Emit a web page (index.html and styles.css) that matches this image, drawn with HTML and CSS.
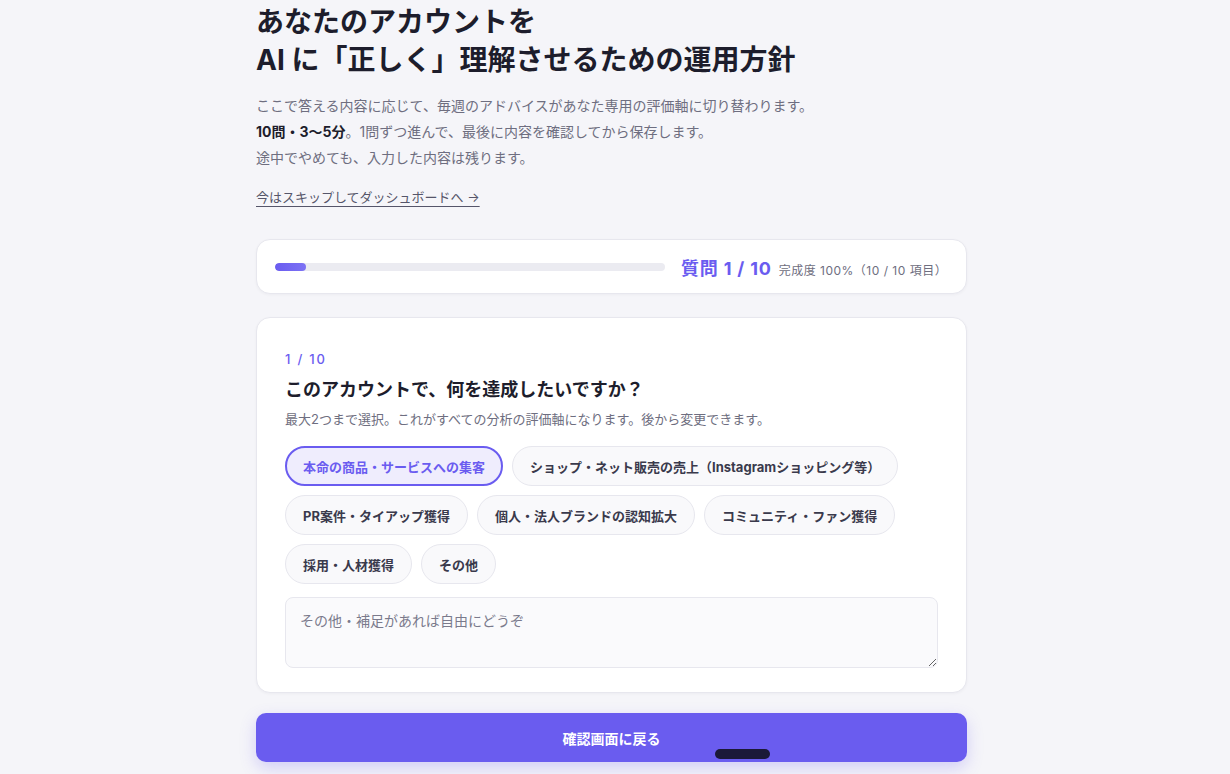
FILE: index.html
```html
<!DOCTYPE html>
<html lang="ja">
<head>
<meta charset="utf-8">
<title>運用方針</title>
<link rel="stylesheet" href="styles.css">
</head>
<body>
<main class="page">
  <header class="intro">
    <h1 class="title">あなたのアカウントを<br>AI に「正しく」理解させるための運用方針</h1>
    <p class="lead">ここで答える内容に応じて、毎週のアドバイスがあなた専用の評価軸に切り替わります。<br><strong>10問・3〜5分</strong>。1問ずつ進んで、最後に内容を確認してから保存します。<br>途中でやめても、入力した内容は残ります。</p>
    <a class="skip" href="#">今はスキップしてダッシュボードへ →</a>
  </header>

  <section class="card progress">
    <div class="track"><div class="fill" style="width:8%"></div></div>
    <div class="progress-label"><span class="q-count">質問 1 / 10</span><span class="q-done">完成度 100%（10 / 10 項目）</span></div>
  </section>

  <section class="card question">
    <div class="step">1 / 10</div>
    <h2 class="q-title">このアカウントで、何を達成したいですか？</h2>
    <p class="hint">最大2つまで選択。これがすべての分析の評価軸になります。後から変更できます。</p>
    <div class="chips">
      <button class="chip selected">本命の商品・サービスへの集客</button>
      <button class="chip">ショップ・ネット販売の売上（Instagramショッピング等）</button>
      <button class="chip">PR案件・タイアップ獲得</button>
      <button class="chip">個人・法人ブランドの認知拡大</button>
      <button class="chip">コミュニティ・ファン獲得</button>
      <button class="chip">採用・人材獲得</button>
      <button class="chip">その他</button>
    </div>
    <textarea class="note" placeholder="その他・補足があれば自由にどうぞ"></textarea>
  </section>

  <button class="primary">確認画面に戻る</button>
</main>
<div class="home-indicator"></div>
</body>
</html>
```
FILE: styles.css
```css
* { box-sizing: border-box; }
html, body { margin: 0; padding: 0; }
body {
  background: #f5f5f9;
  font-family: "Inter", "Noto Sans CJK JP", "Noto Sans", sans-serif;
  color: #1d1d2c;
  height: 774px;
  overflow: hidden;
}
.page {
  width: 711px;
  margin-left: calc(50% - 359px);
  padding-top: 3px;
  display: flex;
  flex-direction: column;
}
.title {
  margin: 0;
  font-size: 28px;
  line-height: 38px;
  font-weight: 700;
  color: #1d1d2c;
}
.lead {
  margin: 14px 0 0;
  font-size: 14px;
  line-height: 26px;
  color: #6e6e80;
}
.lead strong { color: #1d1d2c; font-weight: 700; }
.skip {
  display: inline-block;
  align-self: flex-start;
  margin-top: 16px;
  font-size: 13px;
  line-height: 20px;
  color: #55556a;
  text-decoration: underline;
  text-underline-offset: 4px;
  text-decoration-color: #55556a;
}
.intro { display: flex; flex-direction: column; }
.card {
  background: #fff;
  border: 1px solid #e7e7ee;
  border-radius: 14px;
  box-shadow: 0 1px 3px rgba(30, 30, 60, 0.04);
}
.progress {
  margin-top: 32px;
  height: 55px;
  display: flex;
  align-items: center;
  padding: 0 24px 0 18px;
  gap: 16px;
}
.track {
  flex: 0 0 390px;
  height: 8px;
  border-radius: 4px;
  background: #ebebf1;
  overflow: hidden;
}
.fill {
  height: 100%;
  border-radius: 4px;
  background: linear-gradient(90deg, #6a5cf0, #7d72f4);
}
.progress-label { display: flex; align-items: baseline; gap: 7px; white-space: nowrap; }
.q-count { font-size: 18px; font-weight: 700; color: #6a5cf0; letter-spacing: 0.8px; }
.q-done { font-size: 12px; color: #6e6e80; letter-spacing: 0.5px; }
.question {
  margin-top: 23px;
  padding: 32px 28px 24px;
  display: flex;
  flex-direction: column;
}
.step {
  font-size: 13px;
  line-height: 18px;
  color: #6a5cf0;
  letter-spacing: 1.8px;
  font-weight: 500;
}
.q-title {
  margin: 9px 0 0;
  font-size: 18px;
  line-height: 26px;
  font-weight: 700;
  color: #1d1d2c;
}
.hint {
  margin: 6px 0 0;
  font-size: 13px;
  line-height: 20px;
  color: #6e6e80;
}
.chips {
  margin-top: 17px;
  display: flex;
  flex-wrap: wrap;
  gap: 9px 9px;
}
.chip {
  font-family: inherit;
  height: 40px;
  padding: 0 17px;
  border-radius: 20px;
  border: 1px solid #e7e7ee;
  background: #f9f9fb;
  font-size: 13px;
  font-weight: 700;
  color: #3a3a4c;
  cursor: pointer;
}
.chip.selected {
  border: 2px solid #6a5cf0;
  background: #efedfd;
  color: #6a5cf0;
  padding: 0 16px;
}
.note {
  margin-top: 13px;
  height: 71px;
  width: 100%;
  resize: vertical;
  border: 1px solid #e7e7ee;
  border-radius: 8px;
  background: #fafafc;
  padding: 12px 14px;
  font-family: inherit;
  font-size: 14px;
  line-height: 22px;
  color: #1d1d2c;
}
.note::placeholder { color: #7a7a8c; }
.primary {
  margin-top: 20px;
  height: 49px;
  border: none;
  border-radius: 10px;
  background: #6a5cef;
  color: #fff;
  font-family: inherit;
  font-size: 14px;
  font-weight: 700;
  box-shadow: 0 6px 16px rgba(106, 92, 239, 0.25);
  cursor: pointer;
}
.home-indicator {
  position: absolute;
  left: 715px;
  top: 749px;
  width: 55px;
  height: 10px;
  border-radius: 5px;
  background: #1b1938;
}
```
